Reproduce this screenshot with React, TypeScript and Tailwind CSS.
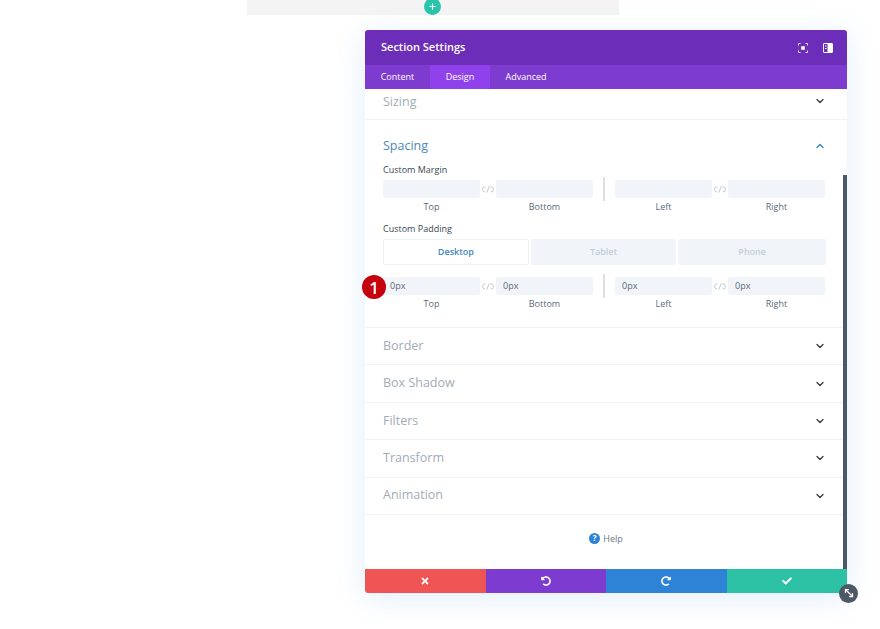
import React from "react";
import { ChevronDown, ChevronUp, MoveDiagonal2, Plus } from "lucide-react";
import { FaCheck, FaRedoAlt, FaTimes, FaUndoAlt } from "react-icons/fa";

const closedRows = ["Border", "Box Shadow", "Filters", "Transform", "Animation"];

const LinkIcon = () => (
  <svg width="12" height="7" viewBox="0 0 12 7" fill="none" stroke="#c2c7cd" strokeWidth="1" className="shrink-0">
    <path d="M3.6 1H2.2Q0.7 1 0.7 2.4V4.4Q0.7 5.8 2.2 5.8H3" />
    <path d="M8.4 1H9.8Q11.3 1 11.3 2.4V4.4Q11.3 5.8 9.8 5.8H8.6" />
    <path d="M7.4 0.4L4.6 6.6" />
  </svg>
);

const SpacingField = ({ label, value }: { label: string; value: string }) => (
  <div className="flex w-[97px] flex-col">
    <div className="flex h-[18px] shrink-0 items-center rounded-[2px] bg-[#f1f5f9] pl-[7px] text-[9px] text-[#5c6978]">{value}</div>
    <div className="mt-[3px] text-center text-[9px] leading-[12px] text-[#5c6978]">{label}</div>
  </div>
);

const SpacingRow = ({ value }: { value: string }) => (
  <div className="flex h-[33px] w-[442px]">
    <SpacingField label="Top" value={value} />
    <div className="flex h-[18px] w-[16px] items-center justify-center">
      <LinkIcon />
    </div>
    <SpacingField label="Bottom" value={value} />
    <div className="mx-[10px] mt-[-3px] h-[24px] w-[2px] bg-[#dcdfe3]" />
    <SpacingField label="Left" value={value} />
    <div className="flex h-[18px] w-[16px] items-center justify-center">
      <LinkIcon />
    </div>
    <SpacingField label="Right" value={value} />
  </div>
);

export default function App() {
  return (
    <div className="relative h-[629px] w-[880px] overflow-hidden bg-white font-['Open_Sans',sans-serif]">
      <div className="relative ml-[247px] h-[15px] w-[372px] bg-[#f4f4f4]">
        <div className="absolute left-[177px] top-[-2px] flex h-[17px] w-[17px] items-center justify-center rounded-full bg-[#29c4a9]">
          <Plus size={9} strokeWidth={3} color="#ffffff" />
        </div>
      </div>

      <div className="relative ml-[365px] mt-[15px] w-[482px] rounded-[3px] bg-white shadow-[0_5px_30px_rgba(43,135,218,0.14)]">
        <div className="flex h-[35px] items-center justify-between rounded-t-[3px] bg-[#6c2eb9] pl-[16px] pr-[14px]">
          <span className="text-[11px] font-semibold text-white">Section Settings</span>
          <div className="flex items-center gap-[15px]">
            <svg width="10" height="10" viewBox="0 0 10 10" fill="none" stroke="#e4d8f4" strokeWidth="1">
              <path d="M0.5 2.5V0.5H2.5M7.5 0.5H9.5V2.5M9.5 7.5V9.5H7.5M2.5 9.5H0.5V7.5" />
              <rect x="3.2" y="3.2" width="3.6" height="3.6" fill="#ffffff" stroke="none" />
            </svg>
            <svg width="10" height="10" viewBox="0 0 10 10" fill="none">
              <rect x="0.5" y="0.5" width="9" height="9" rx="0.5" stroke="#ffffff" />
              <rect x="4.5" y="1" width="5" height="8" fill="#ffffff" />
              <rect x="2" y="2.5" width="1.4" height="1" fill="#ffffff" />
              <rect x="2" y="5" width="1.4" height="1" fill="#ffffff" />
            </svg>
          </div>
        </div>

        <div className="flex h-[24px] bg-[#7d3bcf] text-[9px] font-medium text-white">
          <div className="flex w-[65px] items-center justify-center">Content</div>
          <div className="flex w-[60px] items-center justify-center bg-[#8f42ec]">Design</div>
          <div className="flex w-[72px] items-center justify-center">Advanced</div>
        </div>

        <div className="relative">
          <div className="flex h-[31px] items-start justify-between border-b border-[#f1f3f5] pl-[18px] pr-[21px]">
            <span className="mt-[4px] text-[12.5px] leading-[18px] text-[#a3acb6]">Sizing</span>
            <ChevronDown size={12} strokeWidth={2.5} color="#32373c" className="mt-[6px]" />
          </div>

          <div className="h-[208px] border-b border-[#f1f3f5] pl-[18px]">
            <div className="flex items-center justify-between pr-[21px] pt-[17px]">
              <span className="text-[12.5px] leading-[18px] text-[#4c88b8]">Spacing</span>
              <ChevronUp size={12} strokeWidth={2.5} color="#2d7dbb" />
            </div>
            <div className="mt-[9px] text-[9px] font-medium leading-[12px] text-[#3c4654]">Custom Margin</div>
            <div className="mt-[4px]">
              <SpacingRow value="" />
            </div>
            <div className="mt-[10px] text-[9px] font-medium leading-[12px] text-[#3c4654]">Custom Padding</div>
            <div className="mt-[4px] flex h-[26px] w-[443px] gap-[2px] text-[9px] font-semibold">
              <div className="flex w-[146px] items-center justify-center rounded-[2px] border border-[#eef2f6] bg-white text-[#3f86bd]">Desktop</div>
              <div className="flex w-[146px] items-center justify-center rounded-[2px] bg-[#f1f5f9] text-[#c3ced9]">Tablet</div>
              <div className="flex w-[148px] items-center justify-center rounded-[2px] bg-[#f1f5f9] text-[#c3ced9]">Phone</div>
            </div>
            <div className="mt-[12px]">
              <SpacingRow value="0px" />
            </div>
          </div>

          {closedRows.map((row) => (
            <div key={row} className="flex h-[37.4px] items-center justify-between border-b border-[#f1f3f5] pl-[18px] pr-[21px]">
              <span className="text-[12.5px] text-[#a3acb6]">{row}</span>
              <ChevronDown size={12} strokeWidth={2.5} color="#32373c" />
            </div>
          ))}

          <div className="flex h-[54px] items-center justify-center gap-[3px] pb-[7px] text-[9px] font-medium text-[#6b7785]">
            <span className="flex h-[11px] w-[11px] items-center justify-center rounded-full bg-[#2e85d6] text-[8px] font-bold leading-none text-white">?</span>
            <span>Help</span>
          </div>

          <div className="absolute bottom-0 right-0 h-[394px] w-[4px] bg-[#4c5866]" />
        </div>

        <div className="flex h-[24px] overflow-hidden rounded-b-[3px] text-white">
          <div className="flex flex-1 items-center justify-center bg-[#ef5555]"><FaTimes size={10} /></div>
          <div className="flex flex-1 items-center justify-center bg-[#7d3bcf]"><FaUndoAlt size={10} /></div>
          <div className="flex flex-1 items-center justify-center bg-[#2f83d6]"><FaRedoAlt size={10} /></div>
          <div className="flex flex-1 items-center justify-center bg-[#2cc0a5]"><FaCheck size={10} /></div>
        </div>

        <div className="absolute bottom-[-10px] right-[-11px] flex h-[19px] w-[19px] items-center justify-center rounded-full bg-[#4c5866] text-white">
          <MoveDiagonal2 size={12} strokeWidth={2.5} />
        </div>

        <div className="absolute left-[-3px] top-[245px] flex h-[24px] w-[24px] items-center justify-center rounded-full bg-[#c4010c] text-[17px] font-semibold leading-none text-white">1</div>
      </div>
    </div>
  );
}
